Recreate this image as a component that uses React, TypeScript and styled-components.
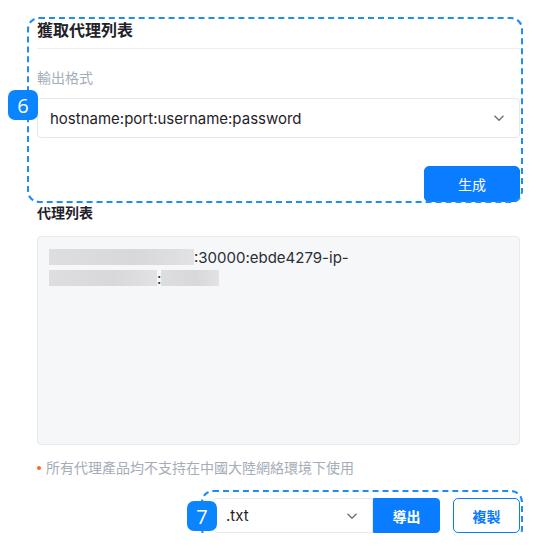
import React from 'react';
import styled, { createGlobalStyle } from 'styled-components';

const GlobalStyle = createGlobalStyle`
  body {
    margin: 0;
    background: #fff;
    font-family: Inter, "Noto Sans CJK TC", sans-serif;
    color: #1f2329;
  }
`;

const Page = styled.div`
  width: 540px;
  padding: 20px 20px 0 37px;
  box-sizing: border-box;
`;

const Tour = styled.div`
  position: relative;
`;

const Outline = styled.div<{ $t: number; $r: number; $b: number; $l: number }>`
  position: absolute;
  top: ${(p) => p.$t}px;
  right: ${(p) => p.$r}px;
  bottom: ${(p) => p.$b}px;
  left: ${(p) => p.$l}px;
  border: 2px dashed #1c8cf8;
  border-radius: 12px;
  pointer-events: none;
`;

const Badge = styled.div<{ $t: number; $l: number }>`
  position: absolute;
  top: ${(p) => p.$t}px;
  left: ${(p) => p.$l}px;
  width: 30px;
  height: 30px;
  border-radius: 7px;
  background: #0a84ff;
  color: #fff;
  font-family: "Open Sans", sans-serif;
  font-size: 20px;
  display: flex;
  align-items: center;
  justify-content: center;
`;

const CardTitle = styled.div`
  font-size: 16px;
  font-weight: 700;
  line-height: 20px;
  padding-bottom: 8px;
  border-bottom: 1px solid #eceef2;
`;

const Label = styled.div`
  margin-top: 20px;
  font-size: 14px;
  line-height: 18px;
  color: #a4adb8;
`;

const SelectBox = styled.div<{ $w?: number; $h: number; $joined?: boolean }>`
  margin-top: ${(p) => (p.$joined ? 0 : 11)}px;
  ${(p) => (p.$w ? `width: ${p.$w}px;` : '')}
  height: ${(p) => p.$h}px;
  box-sizing: border-box;
  border: 1px solid #e6e8ec;
  border-radius: ${(p) => (p.$joined ? '4px 0 0 4px' : '4px')};
  display: flex;
  align-items: center;
  justify-content: space-between;
  padding: 0 14px 0 12px;
  font-size: 15px;
  color: #1f2329;
`;

const Chevron = () => (
  <svg width="12" height="8" viewBox="0 0 12 8" fill="none">
    <path d="M1.5 1.8 6 6.2l4.5-4.4" stroke="#6b7280" strokeWidth="1.4" />
  </svg>
);

const Actions = styled.div`
  display: flex;
  justify-content: flex-end;
  margin-top: 28px;
`;

const Button = styled.button<{ $w: number; $h: number; $outline?: boolean; $joined?: boolean }>`
  width: ${(p) => p.$w}px;
  height: ${(p) => p.$h}px;
  border-radius: ${(p) => (p.$joined ? '0 4px 4px 0' : '5px')};
  border: 1px solid #0a7cff;
  background: ${(p) => (p.$outline ? '#fff' : '#0a7cff')};
  color: ${(p) => (p.$outline ? '#0a7cff' : '#fff')};
  font-family: Inter, "Noto Sans CJK TC", sans-serif;
  font-size: 14px;
  font-weight: ${(p) => (p.$joined || p.$outline ? 700 : 400)};
  cursor: pointer;
`;

const SectionTitle = styled.div`
  margin-top: 2px;
  font-size: 14px;
  font-weight: 700;
  line-height: 18px;
`;

const ListBox = styled.div`
  margin-top: 14px;
  height: 209px;
  box-sizing: border-box;
  background: #f6f7f9;
  border: 1px solid #e8eaee;
  border-radius: 4px;
  padding: 10px 11px;
  font-size: 15px;
  line-height: 21px;
  color: #2a2e35;
`;

const Blur = styled.span<{ $w: number }>`
  display: inline-block;
  width: ${(p) => p.$w}px;
  height: 16px;
  vertical-align: -2px;
  background: linear-gradient(90deg, #dedee0, #d8d8da 60%, #e2e2e4);
  filter: blur(0.6px);
`;

const Note = styled.div`
  margin-top: 14px;
  font-size: 14px;
  line-height: 17px;
  color: #a4adb8;
  display: flex;
  align-items: center;
  gap: 5px;
`;

const Dot = styled.span`
  width: 4px;
  height: 4px;
  border-radius: 50%;
  background: #ff6a1a;
`;

const BottomBar = styled.div`
  margin-top: 22px;
  display: flex;
  justify-content: flex-end;
`;

const ExportRow = styled.div`
  display: flex;
  align-items: center;
  gap: 13px;
`;

const Joined = styled.div`
  display: flex;
`;

export default function App() {
  return (
    <Page>
      <GlobalStyle />
      <Tour>
        <Outline $t={-3} $r={-3} $b={-1} $l={-10} />
        <Badge $t={70} $l={-29}>6</Badge>
        <CardTitle>獲取代理列表</CardTitle>
        <Label>輸出格式</Label>
        <SelectBox $h={40}>
          <span>hostname:port:username:password</span>
          <Chevron />
        </SelectBox>
        <Actions>
          <Button $w={96} $h={36}>生成</Button>
        </Actions>
      </Tour>
      <SectionTitle>代理列表</SectionTitle>
      <ListBox>
        <div>
          <Blur $w={145} />
          :30000:ebde4279-ip-
        </div>
        <div>
          <Blur $w={108} />:<Blur $w={58} />
        </div>
      </ListBox>
      <Note>
        <Dot />
        所有代理產品均不支持在中國大陸網絡環境下使用
      </Note>
      <BottomBar>
        <Tour>
          <ExportRow>
            <Joined>
              <SelectBox $w={160} $h={35} $joined>
                <span>.txt</span>
                <Chevron />
              </SelectBox>
              <Button $w={67} $h={35} $joined>導出</Button>
            </Joined>
            <Button $w={67} $h={35} $outline>複製</Button>
          </ExportRow>
          <Outline $t={-8} $r={-3} $b={-8} $l={-12} />
          <Badge $t={3} $l={-26}>7</Badge>
        </Tour>
      </BottomBar>
    </Page>
  );
}
